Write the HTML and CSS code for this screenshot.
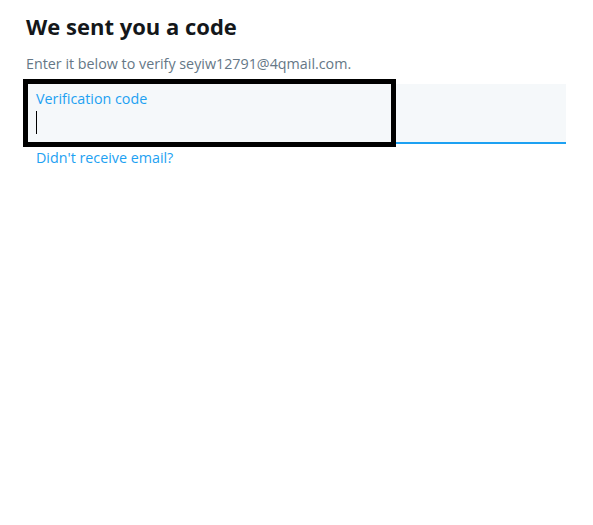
FILE: index.html
```html
<!DOCTYPE html>
<html lang="en">
<head>
  <meta charset="UTF-8" />
  <meta name="viewport" content="width=device-width, initial-scale=1.0"/>
  <title>We sent you a code</title>
  <link rel="stylesheet" href="styles.css">
</head>
<body>
  <div class="verify">
    <h1>We sent you a code</h1>
    <p class="hint">Enter it below to verify seyiw12791@4qmail.com.</p>

    <!-- code input, focused -->
    <div class="field">
      <label class="field-label" for="codeInput">Verification code</label>
      <div class="field-input">
        <span class="caret"></span>
      </div>
      <div class="focus-ring"></div>
    </div>

    <a class="resend" href="#">Didn't receive email?</a>
  </div>
</body>
</html>
```

FILE: styles.css
```css
body {
  margin: 0;
  background: #fff;
  font-family: 'Open Sans', 'Noto Sans', sans-serif;
  color: #14171a;
}
.verify {
  padding: 10px 27px 0 26px;
}
h1 {
  margin: 0;
  font-size: 22px;
  line-height: 32px;
  font-weight: 700;
}
.hint {
  margin: 12px 0 0;
  font-size: 14.3px;
  line-height: 20px;
  color: #657786;
}
.field {
  position: relative;
  margin-top: 10px;
  background: #f5f8fa;
  border-bottom: 2px solid #1da1f2;
  padding: 6px 10px 0;
  height: 52px;
}
.field-label {
  display: block;
  font-size: 14.3px;
  line-height: 18px;
  color: #1da1f2;
}
.field-input {
  height: 28px;
  display: flex;
  align-items: center;
}
.caret {
  width: 1px;
  height: 23px;
  background: #000;
}
.focus-ring {
  position: absolute;
  left: -3px;
  top: -5px;
  width: 363px;
  height: 58px;
  border: 5px solid #000;
}
.resend {
  display: inline-block;
  margin: 4px 0 0 10px;
  font-size: 14.3px;
  line-height: 20px;
  color: #1da1f2;
  text-decoration: none;
}
```
